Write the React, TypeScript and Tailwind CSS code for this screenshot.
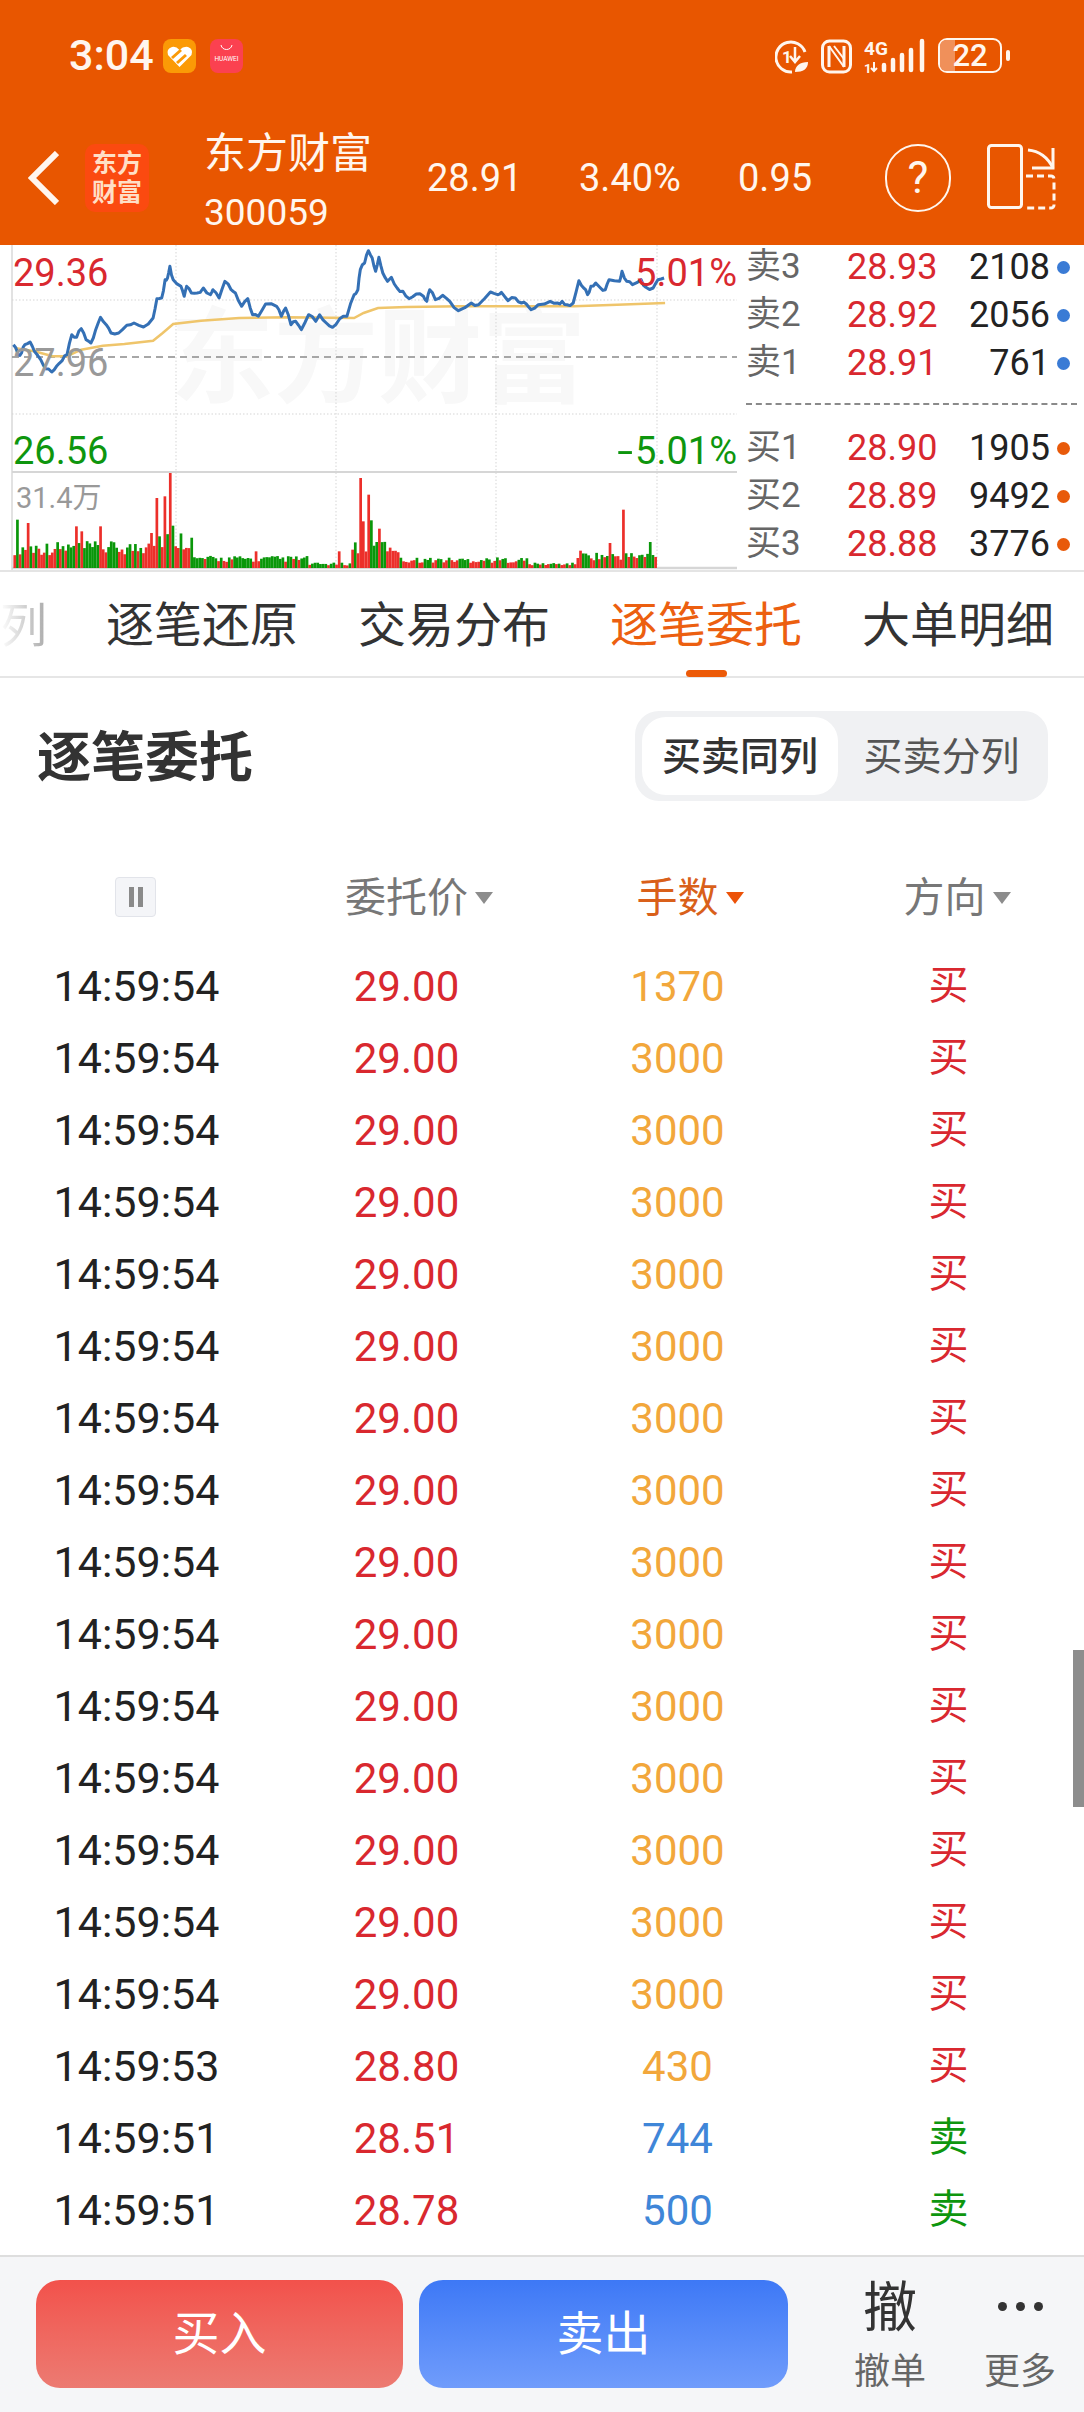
import React from 'react';

const SANS = "font-['Roboto','Noto_Sans_CJK_SC',sans-serif]";

// chart points are read off the reference, x in 0..1568 and y in 0..1020 of the crop
const pricePts: [number, number][] = [
  [28, 320], [38, 350], [45, 345], [52, 320], [63, 312], [72, 340], [85, 365], [95, 392], [108, 402], [118, 385], [130, 368], [140, 350],
  [150, 290], [160, 298], [170, 272], [180, 305], [190, 315], [200, 275], [210, 238], [222, 260], [232, 285], [248, 285], [265, 262],
  [280, 255], [300, 267], [320, 240], [328, 182], [338, 180], [345, 125], [350, 120], [355, 85], [362, 125], [378, 145], [385, 175],
  [390, 145], [400, 165], [412, 165], [425, 150], [440, 170], [445, 155], [458, 180], [470, 130], [483, 155], [492, 165], [505, 205],
  [518, 182], [528, 230], [540, 235], [555, 198], [578, 205], [588, 235], [597, 210], [608, 260], [618, 250], [630, 275], [645, 230],
  [660, 250], [668, 230], [682, 255], [695, 268], [710, 242], [725, 235], [740, 170], [748, 155], [753, 95], [762, 75], [770, 38],
  [778, 60], [785, 100], [792, 58], [800, 105], [810, 130], [818, 118], [830, 150], [842, 160], [855, 182], [870, 168], [885, 175],
  [892, 190], [898, 155], [910, 185], [925, 172], [940, 190], [958, 218], [985, 195], [1000, 200], [1025, 162], [1040, 170], [1048, 163],
  [1062, 188], [1077, 180], [1090, 195], [1100, 198], [1110, 215], [1125, 200], [1150, 190], [1165, 195], [1175, 190], [1185, 200],
  [1198, 195], [1210, 128], [1220, 150], [1228, 170], [1235, 145], [1245, 135], [1255, 150], [1265, 155], [1273, 125], [1295, 130],
  [1300, 100], [1310, 130], [1322, 140], [1340, 125], [1350, 148], [1365, 150], [1375, 125], [1388, 120],
];
const avgPts: [number, number][] = [
  [30, 330], [72, 340], [110, 355], [140, 355], [170, 335], [215, 323], [260, 318], [320, 308], [340, 285], [362, 258], [420, 248],
  [500, 240], [600, 238], [740, 240], [760, 225], [790, 210], [850, 207], [960, 205], [1200, 205], [1290, 200], [1390, 195],
];
const toPath = (pts: [number, number][]) =>
  pts.map(([x, y]) => `${(x / 2.09).toFixed(1)},${(y / 3 - 7).toFixed(1)}`).join(' ');

const noise = (i: number) => Math.abs(Math.sin(i * 12.9898) * 43758.5453) % 1;

// the real line is tick data, so add a little wobble between the read-off points
const jaggedPrice = pricePts.flatMap((p, i): [number, number][] => {
  const next = pricePts[i + 1];
  if (!next) return [p];
  return [p, [(p[0] + next[0]) / 2, (p[1] + next[1]) / 2 + (noise(i) - 0.5) * 12]];
});

const spikes: Record<number, [number, string]> = {
  35: [145, 'g'], 58: [135, 'r'], 155: [125, 'r'], 170: [110, 'r'], 207: [125, 'r'], 315: [105, 'r'], 325: [210, 'r'], 333: [95, 'g'],
  342: [215, 'r'], 355: [285, 'r'], 360: [127, 'g'], 535: [50, 'r'], 705: [50, 'r'], 750: [270, 'r'], 758: [140, 'r'], 768: [220, 'r'],
  775: [143, 'g'], 790: [118, 'r'], 1210: [52, 'r'], 1272: [75, 'r'], 1300: [175, 'r'], 1355: [78, 'g'], 1373: [148, 'r'],
};
function envelope(zx: number) {
  if (zx < 300) return 70;
  if (zx < 400) return 100;
  if (zx < 640) return 32;
  if (zx < 730) return 14;
  if (zx < 830) return 75;
  if (zx < 1100) return 28;
  if (zx < 1200) return 14;
  return 42;
}
const bars = Array.from({ length: 240 }, (_, i) => {
  const zx = 28 + (i * 1345) / 240;
  const r = noise(i);
  const key = Object.keys(spikes).map(Number).find((k) => Math.abs(k - zx) < 2.9);
  const h = key ? spikes[key][0] : envelope(zx) * (0.55 + 0.6 * r);
  const color = key ? spikes[key][1] : r > 0.5 ? 'g' : 'r';
  return { x: zx / 2.09, h: h / 3, color };
});

const asks = [
  { label: '卖3', price: '28.93', vol: '2108' },
  { label: '卖2', price: '28.92', vol: '2056' },
  { label: '卖1', price: '28.91', vol: '761' },
];
const bids = [
  { label: '买1', price: '28.90', vol: '1905' },
  { label: '买2', price: '28.89', vol: '9492' },
  { label: '买3', price: '28.88', vol: '3776' },
];

const orders = [
  ...Array.from({ length: 15 }, (_, i) => ({
    time: '14:59:54', price: '29.00', vol: i === 0 ? '1370' : '3000', side: '买',
  })),
  { time: '14:59:53', price: '28.80', vol: '430', side: '买' },
  { time: '14:59:51', price: '28.51', vol: '744', side: '卖' },
  { time: '14:59:51', price: '28.78', vol: '500', side: '卖' },
];

function StatusBar() {
  return (
    <div className="mt-[37px] flex h-[37px] items-center">
      <span className="ml-[69px] w-[94px] shrink-0 text-[43px] leading-none font-medium text-[#fff6ee]">3:04</span>
      <svg className="shrink-0" width="33" height="34" viewBox="0 0 33 34">
        <rect width="33" height="34" rx="8" fill="#fb9a06" />
        <path d="M16.5 28 5 16Q3 10 9 8q4-1 7.5 3 4-4 8.5-3 5.5 2 3.5 8z" fill="#fff" />
        <path d="m9 19 9-8M14 24l9-8" stroke="#fb9a06" strokeWidth="3" />
      </svg>
      <svg className="ml-[14px] shrink-0" width="33" height="34" viewBox="0 0 33 34">
        <rect width="33" height="34" rx="8" fill="#fb4150" />
        <path d="M11 6c1 6 10 6 11 0" fill="none" stroke="#fff" strokeWidth="1" />
        <text x="16.5" y="22" fontSize="6.5" fill="#fff" textAnchor="middle" fontFamily="Roboto">HUAWEI</text>
      </svg>
      <svg className="ml-[532px] shrink-0" width="152" height="38" viewBox="0 0 152 38" fill="none" stroke="#fff6ee">
        <path d="M30 15A15 15 0 1 0 17 35" strokeWidth="3" />
        <text x="7" y="26" fontSize="17" fontWeight="700" fill="#fff6ee" stroke="none" fontFamily="Roboto">1</text>
        <path d="M20 10v15m-5-6 5 6 5-6" strokeWidth="2.5" />
        <path d="M20 35c0-6 5-10 13-10 0 7-5 10-13 10z" fill="#fff6ee" stroke="none" />
        <rect x="47.5" y="4" width="28" height="31" rx="7" strokeWidth="3" />
        <path d="M54 9v21M69 9v21" strokeWidth="3" />
        <path d="m54 9 15 21M59 9l10 13" strokeWidth="2" />
        <text x="89" y="18" fontSize="19" fontWeight="700" fill="#fff6ee" stroke="none" fontFamily="Roboto">4G</text>
        <text x="89" y="36" fontSize="13" fontWeight="700" fill="#fff6ee" stroke="none" fontFamily="Roboto">1</text>
        <path d="M99 25v9m-3-3 3 3 3-3" strokeWidth="2" />
        <g strokeWidth="4.5" strokeLinecap="round">
          <path d="M109 28v5M118 23v10M127 18v15M136 13v20M147 4v29" />
        </g>
      </svg>
      <div className="relative ml-[11px] flex h-[35px] w-[64px] shrink-0 items-center justify-center rounded-[9px] border-[2.5px] border-[#fff6ee]">
        <div className="absolute inset-y-0 left-0 w-[15px] rounded-l-[6px] bg-[#f0905a]" />
        <span className="relative text-[31px] leading-[30px] font-medium text-[#fff6ee]">22</span>
      </div>
      <div className="ml-[4px] h-[11px] w-[4px] shrink-0 rounded-[2px] bg-[#fff6ee]" />
    </div>
  );
}

function StockRow() {
  return (
    <div className="mt-[70px] flex h-[68px] items-center text-[#fff6ee]">
      <svg className="ml-[28px] shrink-0" width="31" height="54" viewBox="0 0 31 54" fill="none">
        <path d="M29 2 4 27l25 25" stroke="#fff6ee" strokeWidth="6" />
      </svg>
      <div className="ml-[26px] flex h-[68px] w-[64px] shrink-0 flex-col items-center justify-center rounded-[10px] bg-[#fb4a10] text-[25px] leading-[29px] font-semibold text-[#ffdfc6]">
        <span>东方</span>
        <span>财富</span>
      </div>
      <div className="mt-[-12px] ml-[55px] w-[223px] shrink-0 self-start">
        <div className="h-[44px] text-[42px] leading-[44px]">东方财富</div>
        <div className="mt-[17px] h-[40px] text-[37px] leading-[40px]">300059</div>
      </div>
      <span className="w-[152px] shrink-0 text-[38px]">28.91</span>
      <span className="w-[159px] shrink-0 text-[38px]">3.40%</span>
      <span className="w-[147px] shrink-0 text-[38px]">0.95</span>
      <div className="flex h-[68px] w-[66px] shrink-0 items-center justify-center rounded-full border-[2.5px] border-[#fff6ee] text-[44px] leading-none">?</div>
      <svg className="ml-[36px] shrink-0" width="72" height="68" viewBox="0 0 72 68" fill="none" stroke="#fff6ee" strokeWidth="3">
        <rect x="1.5" y="1.5" width="33" height="62" rx="3" />
        <path d="M41 6c11 1 20 8 25 18" />
        <path d="M66 4v20H45" />
        <path d="M39 32h25a3 3 0 0 1 3 3v26a3 3 0 0 1-3 3H39" strokeDasharray="7 4" />
      </svg>
    </div>
  );
}

function Chart() {
  return (
    <div className="relative h-[325px] w-[737px] shrink-0 overflow-hidden">
      <svg className="absolute inset-0" width="737" height="325" viewBox="0 0 737 325">
        <text x="170" y="150" fontSize="104" fontWeight="700" fill="#f8f8f8" fontFamily="Noto Sans CJK SC">东方财富</text>
        <path d="M12 0v325" stroke="#d9d9d9" strokeWidth="1.5" />
        <g stroke="#d5d5d5" strokeDasharray="1.5 2">
          <path d="M12 55h725M12 169h725" />
          <path d="M176 0v320M336 0v320M496 0v320M657 0v320" />
        </g>
        <path d="M12 112h725" stroke="#8a8a8a" strokeWidth="1.5" strokeDasharray="7 5" />
        <path d="M12 227h725" stroke="#d6d6d6" strokeWidth="2" />
        <path d="M12 323h725" stroke="#d6d6d6" strokeWidth="2.5" />
        <polyline points={toPath(avgPts)} fill="none" stroke="#efc56b" strokeWidth="2.5" />
        <polyline points={toPath(jaggedPrice)} fill="none" stroke="#3470b5" strokeWidth="3" strokeLinejoin="round" />
        {bars.map((b, i) => (
          <rect key={i} x={b.x} y={323 - b.h} width="2.7" height={b.h} fill={b.color === 'r' ? '#ec2f2a' : '#0a970a'} />
        ))}
      </svg>
      <span className="absolute top-[6px] left-[13px] text-[38px] leading-[44px] text-[#d9282f]">29.36</span>
      <span className="absolute top-[6px] right-0 text-[38px] leading-[44px] text-[#d9282f]">5.01%</span>
      <span className="absolute top-[96px] left-[13px] text-[38px] leading-[44px] text-[#999]">27.96</span>
      <span className="absolute top-[184px] left-[13px] text-[38px] leading-[44px] text-[#0e960e]">26.56</span>
      <span className="absolute top-[184px] right-0 text-[38px] leading-[44px] text-[#0e960e]">
        <span className="mr-[5px] inline-block scale-x-150">-</span>5.01%
      </span>
      <span className="absolute top-[236px] left-[16px] text-[29px] leading-[34px] text-[#999]">31.4万</span>
    </div>
  );
}

function QuoteRow({ label, price, vol, dot }: { label: string; price: string; vol: string; dot: string }) {
  return (
    <div className="flex h-[48px] items-center">
      <span className="w-[101px] shrink-0 text-[35px] text-[#666]">{label}</span>
      <span className="w-[88px] shrink-0 text-[36px] text-[#d9282f]">{price}</span>
      <span className="w-[115px] shrink-0 text-right text-[36px] text-[#222]">{vol}</span>
      <span className={`ml-[7px] h-[13px] w-[13px] shrink-0 rounded-full ${dot}`} />
    </div>
  );
}

function QuotePanel() {
  return (
    <div className="mt-[-2px] ml-[9px] flex-1">
      {asks.map((a) => (
        <QuoteRow key={a.label} {...a} dot="bg-[#3a7bd5]" />
      ))}
      <div className="mt-[16px] mb-[19px] w-[331px] border-t-[2px] border-dashed border-[#8a8a8a]" />
      {bids.map((b) => (
        <QuoteRow key={b.label} {...b} dot="bg-[#e85a0a]" />
      ))}
    </div>
  );
}

function Tabs() {
  const tabs = ['逐笔还原', '交易分布', '逐笔委托', '大单明细'];
  return (
    <div className="relative flex h-[106px] border-b-[2px] border-[#e6e6e6] pt-[24px]">
      <div className="h-[60px] w-[76px] shrink-0 pr-[32px] text-right">
        <span className="bg-linear-to-r from-white to-[#aaa] bg-clip-text text-[47px] leading-[60px] text-transparent">列</span>
      </div>
      {tabs.map((t) => (
        <div
          key={t}
          className={`h-[60px] w-[252px] shrink-0 text-center text-[48px] leading-[60px] ${t === '逐笔委托' ? 'text-[#ec5f10]' : 'text-[#333]'}`}
        >
          {t}
        </div>
      ))}
      <div className="absolute top-[98px] left-[686px] h-[7px] w-[41px] rounded-full bg-[#ec5a08]" />
    </div>
  );
}

function TitleRow() {
  return (
    <div className="flex items-center justify-between pt-[33px] pr-[36px] pl-[37px]">
      <span className="pt-[6px] text-[54px] leading-[84px] font-bold text-[#333]">逐笔委托</span>
      <div className="flex h-[90px] w-[413px] items-center rounded-[24px] bg-[#f0f1f3] pl-[7px]">
        <div className="flex h-[78px] w-[196px] items-center justify-center rounded-[24px] bg-white pt-[3px] text-[39px] font-medium text-[#333]">买卖同列</div>
        <div className="flex h-[78px] w-[207px] items-center justify-center pt-[3px] text-[39px] text-[#555]">买卖分列</div>
      </div>
    </div>
  );
}

function SortHead({ label, active }: { label: string; active?: boolean }) {
  return (
    <span className={`relative block pt-[2px] text-[41px] leading-[70px] ${active ? 'text-[#d9601a]' : 'text-[#777]'}`}>
      {label}
      <svg className="absolute top-[31px] left-[calc(100%+7px)]" width="18" height="12" viewBox="0 0 18 12">
        <path d="M0 0h18L9 12z" fill={active ? '#ec5208' : '#8c8c8c'} />
      </svg>
    </span>
  );
}

export default function App() {
  return (
    <div className={`relative flex h-[2412px] w-[1084px] flex-col overflow-hidden bg-white ${SANS}`}>
      <div className="h-[245px] shrink-0 bg-[#e85600]">
        <StatusBar />
        <StockRow />
      </div>

      <div className="flex h-[327px] shrink-0 border-b-[2px] border-[#e4e4e4]">
        <Chart />
        <QuotePanel />
      </div>

      <Tabs />
      <TitleRow />

      <div className="mt-[60px] grid h-[72px] shrink-0 grid-cols-4 items-center justify-items-center">
        <div className="flex h-[40px] w-[41px] items-center justify-center gap-[4px] rounded-[4px] border border-[#e2e4ea] bg-[#f4f5f8]">
          <span className="h-[20px] w-[5px] bg-[#8a8a8a]" />
          <span className="h-[20px] w-[5px] bg-[#8a8a8a]" />
        </div>
        <SortHead label="委托价" />
        <SortHead label="手数" active />
        <div className="pr-[8px]">
          <SortHead label="方向" />
        </div>
      </div>

      <div className="mt-[17px] flex-1 overflow-hidden">
        {orders.map((o, i) => (
          <div key={i} className="grid h-[72px] grid-cols-4 items-center justify-items-center text-[42px]">
            <span className="ml-[2px] text-[43px] text-[#222]">{o.time}</span>
            <span className="text-[#d9282f]">{o.price}</span>
            <span className={o.side === '买' ? 'text-[#f2a73b]' : 'text-[#3f86d8]'}>{o.vol}</span>
            <span className={`text-[40px] ${o.side === '买' ? 'text-[#d9282f]' : 'text-[#0e960e]'}`}>{o.side}</span>
          </div>
        ))}
      </div>

      <div className="absolute top-[1650px] right-0 h-[157px] w-[11px] bg-[#8d8d8d]" />

      <div className="flex h-[157px] shrink-0 border-t-[2px] border-[#dedede] bg-[#f5f6f8] pt-[23px] pl-[36px]">
        <div className="flex h-[108px] w-[367px] shrink-0 items-center justify-center rounded-[24px] bg-linear-to-b from-[#f2514b] to-[#ec7a72] text-[47px] text-white">买入</div>
        <div className="ml-[16px] flex h-[108px] w-[369px] shrink-0 items-center justify-center rounded-[24px] bg-linear-to-b from-[#3d78f6] to-[#709cfb] text-[47px] text-white">卖出</div>
        <div className="mt-[-4px] ml-[42px] w-[120px] shrink-0 text-center">
          <div className="h-[60px] pt-[3px] text-[54px] leading-[60px] text-[#333]">撤</div>
          <div className="mt-[16px] h-[40px] text-[36px] leading-[40px] text-[#666]">撤单</div>
        </div>
        <div className="mt-[-4px] ml-[16px] w-[108px] shrink-0 text-center">
          <div className="flex h-[60px] items-center justify-center gap-[9px]">
            <span className="h-[9px] w-[9px] rounded-full bg-[#333]" />
            <span className="h-[9px] w-[9px] rounded-full bg-[#333]" />
            <span className="h-[9px] w-[9px] rounded-full bg-[#333]" />
          </div>
          <div className="mt-[16px] h-[40px] text-[36px] leading-[40px] text-[#666]">更多</div>
        </div>
      </div>
    </div>
  );
}
